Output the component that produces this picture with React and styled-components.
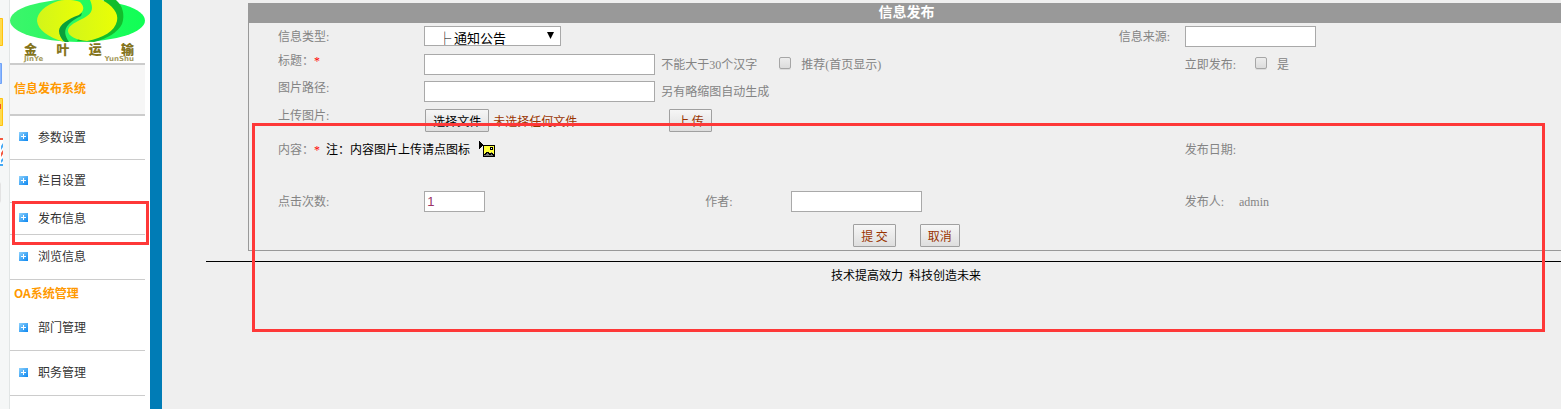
import React, { useRef } from "react";
import styled, { createGlobalStyle } from "styled-components";

const GlobalStyle = createGlobalStyle`
  * {
    box-sizing: border-box;
  }

  body {
    margin: 0;
    background-color: #efefef;
    font-family: "Liberation Serif", "Noto Sans CJK SC", serif;
    font-size: 12px;
    line-height: 14px;
    color: #848484;
  }
`;

const Page = styled.div`
  display: flex;
  min-height: 100vh;
  overflow: hidden;
`;

/* browser strip */

const Strip = styled.div`
  flex: none;
  width: 10px;
  padding-top: 18px;
  display: flex;
  flex-direction: column;
  gap: 12px;
  background-color: #f5f7f7;
  border-right: 1px solid #e1e5e5;
`;

const StripIcon = styled.svg`
  display: block;
  width: 4px;
  height: 28px;
`;

/* sidebar */

const Sidebar = styled.nav`
  flex: none;
  width: 152px;
  padding-right: 5px;
  background-color: white;
  border-right: 12px solid #007cb6;
  font-family: "Noto Sans CJK SC", sans-serif;
  color: #333;
`;

const Logo = styled.div`
  height: 65px;
  border-bottom: 2px solid #ccc;
`;

const LogoMark = styled.svg`
  display: block;
  width: 100%;
  height: 42px;
`;

const LogoText = styled.div`
  display: flex;
  justify-content: space-between;
  padding: 0 11px 0 14px;
  font-size: 13px;
  font-weight: 900;
  line-height: 14px;
  color: #84741c;
`;

const LogoPinyin = styled(LogoText)`
  font-family: "DejaVu Sans", sans-serif;
  font-size: 7px;
  font-weight: bold;
  line-height: 7px;
  color: #a59a5c;
`;

const MenuTitle = styled.h2`
  margin: 0;
  height: 51px;
  padding: 0 0 4px 4px;
  display: flex;
  align-items: center;
  background-color: #f6f6f6;
  border-bottom: 2px solid #ccc;
  font-size: 12px;
  font-weight: bold;
  color: #ff9900;
`;

const SubTitle = styled(MenuTitle)`
  height: 26px;
  padding-bottom: 0;
  background-color: white;
  border-bottom: none;
`;

const MenuItem = styled.div`
  position: relative;
  height: ${(props) => props.$height}px;
  border-bottom: 1px solid #ccc;
`;

const MenuLink = styled.a`
  height: 100%;
  padding: 0 0 2px 9px;
  display: flex;
  align-items: center;
  gap: 10px;
  color: #333;
  text-decoration: none;
`;

const Plus = styled.svg`
  width: 9px;
  height: 9px;
`;

/* red marker frames, they lie over the page */

const Mark = styled.div`
  position: absolute;
  z-index: 1;
  border: 3px solid #fe3838;
  pointer-events: none;
`;

const MenuMark = styled(Mark)`
  top: -2px;
  left: 2px;
  right: -4px;
  height: 44px;
`;

const FormMark = styled(Mark)`
  top: 123px;
  left: 90px;
  right: 16px;
  height: 209px;
`;

/* form */

const Main = styled.main`
  position: relative;
  flex: 1;
  min-width: 0;
  padding: 3px 0 0 44px;
`;

const Panel = styled.form`
  margin: 0 -3px 0 42px;
  border: solid #999;
  border-width: 0 0 1px 1px;
`;

const PanelTitle = styled.h1`
  margin: 0;
  background-color: #999;
  color: white;
  font-size: 14px;
  font-weight: bold;
  line-height: 20px;
  text-align: center;
`;

const Row = styled.div`
  display: grid;
  grid-template-columns:
    minmax(0, 175fr) minmax(0, 281fr) minmax(0, 86fr)
    minmax(0, 327fr) minmax(0, 66fr) minmax(0, 379fr);
  align-items: ${(props) => (props.$top ? "start" : "center")};
  align-content: start;
  min-height: ${(props) => props.$height}px;
  padding-top: 3px;
  white-space: nowrap;
`;

const Cell = styled.div`
  grid-column: ${(props) => props.$col};
  padding-left: ${(props) => (props.$first ? 29 : 0)}px;
`;

const Field = styled(Cell)`
  align-self: center;
  display: flex;
  align-items: center;
`;

const SelectCell = styled(Cell)`
  align-self: start;
`;

const Star = styled.span`
  color: red;
`;

const TextInput = styled.input`
  width: ${(props) => props.$width}px;
  height: 21px;
  margin: 0 6px 0 0;
  padding: 1px 2px;
  border: 1px solid #a9a9a9;
  border-radius: 0;
  background-color: white;
  color: #993366;
  font-family: "Liberation Sans", sans-serif;
  font-size: 13px;
`;

const SelectBox = styled.div`
  position: relative;
  width: 137px;
`;

const Select = styled.select`
  display: block;
  width: 100%;
  height: 20px;
  margin: 0;
  padding: 3px 20px 0 13px;
  appearance: none;
  border: 1px solid #a9a9a9;
  border-radius: 0;
  background-color: white;
  color: black;
  font-family: "Noto Sans CJK SC", sans-serif;
  font-size: 13px;
  line-height: 15px;
`;

const Arrow = styled.svg`
  position: absolute;
  top: 6px;
  right: 7px;
  width: 7px;
  height: 7px;
  pointer-events: none;
`;

const Checkbox = styled.input`
  appearance: none;
  width: 12px;
  height: 12px;
  margin: 0 10px 4px ${(props) => props.$left}px;
  border: 1px solid #a6a6a6;
  border-radius: 2px;
  background: linear-gradient(#ededed, #dcdcdc);
  box-shadow: 0 1px 0 #dcdcdc;
`;

const Button = styled.button`
  height: 23px;
  padding: 0 7px;
  border: 1px solid #a0a0a0;
  border-radius: 1px;
  background: linear-gradient(#f6f6f6, #dedede);
  color: ${(props) => (props.$dark ? "black" : "#993300")};
  font-family: "Noto Sans CJK SC", sans-serif;
  font-size: 12px;
  white-space: nowrap;
`;

const FileName = styled.span`
  width: 176px;
  margin-left: 4px;
  color: #993300;
  font-family: "Noto Sans CJK SC", sans-serif;
`;

const FileField = styled(Field)`
  padding-left: 1px;
`;

const Note = styled(Field)`
  align-self: start;
`;

const NoteText = styled.span`
  margin: 0 9px 0 6px;
  color: black;
`;

const PictureButton = styled.button`
  height: 17px;
  padding: 0;
  border: none;
  background: none;
`;

const PictureIcon = styled.svg`
  display: block;
  width: 17px;
  height: 17px;
`;

const Actions = styled.div`
  display: flex;
  justify-content: center;
  gap: 24px;
  min-height: 29px;
  padding-top: 3px;
`;

const Rule = styled.hr`
  height: 1px;
  margin: 10px 0 0;
  border: none;
  background-color: black;
`;

const Footer = styled.footer`
  margin: 6px -3px 0 42px;
  color: black;
  line-height: 16px;
  text-align: center;
`;

const MenuEntry = ({ text, height, marked }) => (
  <MenuItem $height={height}>
    <MenuLink href="#">
      <Plus viewBox="0 0 9 9">
        <defs>
          <linearGradient id="plus" x1="0" y1="0" x2="1" y2="1">
            <stop offset="0" stopColor="#8fd2fc" />
            <stop offset="1" stopColor="#0a86f0" />
          </linearGradient>
        </defs>
        <rect width="9" height="9" fill="url(#plus)" />
        <path d="M2 4.5h5M4.5 2v5" stroke="white" />
      </Plus>
      {text}
    </MenuLink>
    {marked && <MenuMark />}
  </MenuItem>
);

const App = () => {
  const fileRef = useRef(null);

  return (
    <>
      <GlobalStyle />
      <Page>
        <Strip>
          <StripIcon viewBox="0 0 4 28">
            <path d="M0 .5h2.5v27H0" fill="#ffdb4d" stroke="#ffc20e" />
          </StripIcon>
          <StripIcon viewBox="0 0 4 28">
            <path d="M0 5.5h1.5v20H0" fill="#8db8ff" stroke="#6fa3f7" />
          </StripIcon>
          <StripIcon viewBox="0 0 4 28">
            <path d="M0 .5h2.5v27H0" fill="#ffdb4d" stroke="#ffc20e" />
            <rect y="6" width="1" height="5" fill="#f0532d" />
          </StripIcon>
          <StripIcon viewBox="0 0 4 28">
            <rect width="3" height="28" fill="white" />
            <path d="M0 0h3v2H0zM1 15l2-3v4l-2 3z" fill="#f4573f" />
            <path d="M1 8l2-3v4l-2 3zM1 22l2-2v3l-2 2zM0 26h3v2H0z" fill="#45a9f5" />
          </StripIcon>
          <StripIcon viewBox="0 0 4 28">
            <path d="M0 4l1 2v17l-1 2z" fill="#e3e3e3" />
          </StripIcon>
        </Strip>

        <Sidebar>
          <Logo>
            <LogoMark viewBox="0 0 135 42" preserveAspectRatio="none">
              <defs>
                <linearGradient id="oval" x1="0" x2="1">
                  <stop offset="0" stopColor="#3cf56b" />
                  <stop offset="1" stopColor="#10ff55" />
                </linearGradient>
                <linearGradient id="leaf" x1="0" x2="1">
                  <stop offset="0" stopColor="#d2f51a" />
                  <stop offset="1" stopColor="#eaff05" />
                </linearGradient>
              </defs>
              <ellipse cx="67.5" cy="20.5" rx="67.5" ry="21.5" fill="url(#oval)" />
              <path d="M94 0h12c7 6 9 15 6 24-4 8-15 15-28 18l-17-1z" fill="#12bd2c" />
              <path d="M72 13C57 18 46 26 48 33c2 5 4 7 7 9h4c-4-6-6-12 0-18 3-3 7-6 12-8z" fill="#0aa03a" />
              <path d="M48 1C57-1 65 0 70 2c5 5 4 9-1 13C58 19 49 25 49 31c0 4 2 7 5 11C38 37 28 30 27 21c0-8 8-16 21-20z" fill="url(#leaf)" />
              <path d="M80 0h12c10 5 17 13 15 21-2 10-14 17-30 20-11-1-19-5-19-10 0-4 4-7 10-10 8-4 14-7 14-13 0-3-1-6-2-8z" fill="url(#leaf)" />
            </LogoMark>
            <LogoText>
              <span>金</span>
              <span>叶</span>
              <span>运</span>
              <span>输</span>
            </LogoText>
            <LogoPinyin>
              <span>JinYe</span>
              <span>YunShu</span>
            </LogoPinyin>
          </Logo>
          <MenuTitle>信息发布系统</MenuTitle>
          <MenuEntry text="参数设置" height={44} />
          <MenuEntry text="栏目设置" height={43} />
          <MenuEntry text="发布信息" height={32} marked />
          <MenuEntry text="浏览信息" height={45} />
          <SubTitle>OA系统管理</SubTitle>
          <MenuEntry text="部门管理" height={45} />
          <MenuEntry text="职务管理" height={45} />
        </Sidebar>

        <Main>
          <Panel onSubmit={(e) => e.preventDefault()}>
            <PanelTitle>信息发布</PanelTitle>

            <Row $height={28}>
              <Cell $col="1" $first>
                <label htmlFor="type">信息类型:</label>
              </Cell>
              <SelectCell $col="2">
                <SelectBox>
                  <Select id="type">
                    <option>├ 通知公告</option>
                  </Select>
                  <Arrow viewBox="0 0 7 7">
                    <path d="M0 0h7L3.5 7z" fill="black" />
                  </Arrow>
                </SelectBox>
              </SelectCell>
              <Cell $col="5">
                <label htmlFor="source">信息来源:</label>
              </Cell>
              <Field $col="6">
                <TextInput id="source" $width={131} />
              </Field>
            </Row>

            <Row $height={27} $top>
              <Cell $col="1" $first>
                <label htmlFor="title">标题：</label>
                <Star>*</Star>
              </Cell>
              <Field $col="2 / 6">
                <TextInput id="title" $width={231} />
                不能大于30个汉字
                <Checkbox id="top" type="checkbox" $left={22} />
                <label htmlFor="top">推荐(首页显示)</label>
              </Field>
              <Field $col="6">
                立即发布:
                <Checkbox id="now" type="checkbox" $left={19} />
                <label htmlFor="now">是</label>
              </Field>
            </Row>

            <Row $height={28} $top>
              <Cell $col="1" $first>
                <label htmlFor="path">图片路径:</label>
              </Cell>
              <Field $col="2 / 6">
                <TextInput id="path" $width={231} />
                另有略缩图自动生成
              </Field>
            </Row>

            <Row $height={32} $top>
              <Cell $col="1" $first>
                <label htmlFor="file">上传图片:</label>
              </Cell>
              <FileField $col="2 / 6">
                <input id="file" type="file" ref={fileRef} hidden />
                <Button type="button" $dark onClick={() => fileRef.current.click()}>
                  选择文件
                </Button>
                <FileName>未选择任何文件</FileName>
                <Button type="button">上 传</Button>
              </FileField>
            </Row>

            <Row $height={50} $top>
              <Note $col="1 / 6" $first>
                内容：<Star>*</Star>
                <NoteText>注：内容图片上传请点图标</NoteText>
                <PictureButton type="button" aria-label="上传图片">
                  <PictureIcon viewBox="0 0 17 17" shapeRendering="crispEdges">
                    <path d="M0 0h1v1h1v1h1v1h1v2H3v1H2v1H1v1H0z" fill="black" />
                    <rect x="4.5" y="4.5" width="11" height="11" fill="#ffff3c" stroke="black" />
                    <path d="M5 14l3-3 2 2 2-2 3 3v1H5z" fill="#777" />
                    <path d="M5 13h1v-1h1v-1h2v1h1v1h1v-1h2v1h1v1h1" fill="none" stroke="black" />
                    <rect x="11.5" y="6.5" width="2" height="2" fill="white" stroke="black" />
                  </PictureIcon>
                </PictureButton>
              </Note>
              <Field $col="6">发布日期:</Field>
            </Row>

            <Row $height={33}>
              <Cell $col="1" $first>
                <label htmlFor="hits">点击次数:</label>
              </Cell>
              <Field $col="2">
                <TextInput id="hits" $width={61} defaultValue="1" />
              </Field>
              <Cell $col="3">
                <label htmlFor="author">作者:</label>
              </Cell>
              <Field $col="4">
                <TextInput id="author" $width={131} />
              </Field>
              <Cell $col="6">发布人:&nbsp;&nbsp;&nbsp;&nbsp; admin</Cell>
            </Row>

            <Actions>
              <Button type="submit">提 交</Button>
              <Button type="reset">取消</Button>
            </Actions>
          </Panel>
          <Rule />
          <Footer>技术提高效力&nbsp; 科技创造未来</Footer>
          <FormMark />
        </Main>
      </Page>
    </>
  );
};

export default App;
